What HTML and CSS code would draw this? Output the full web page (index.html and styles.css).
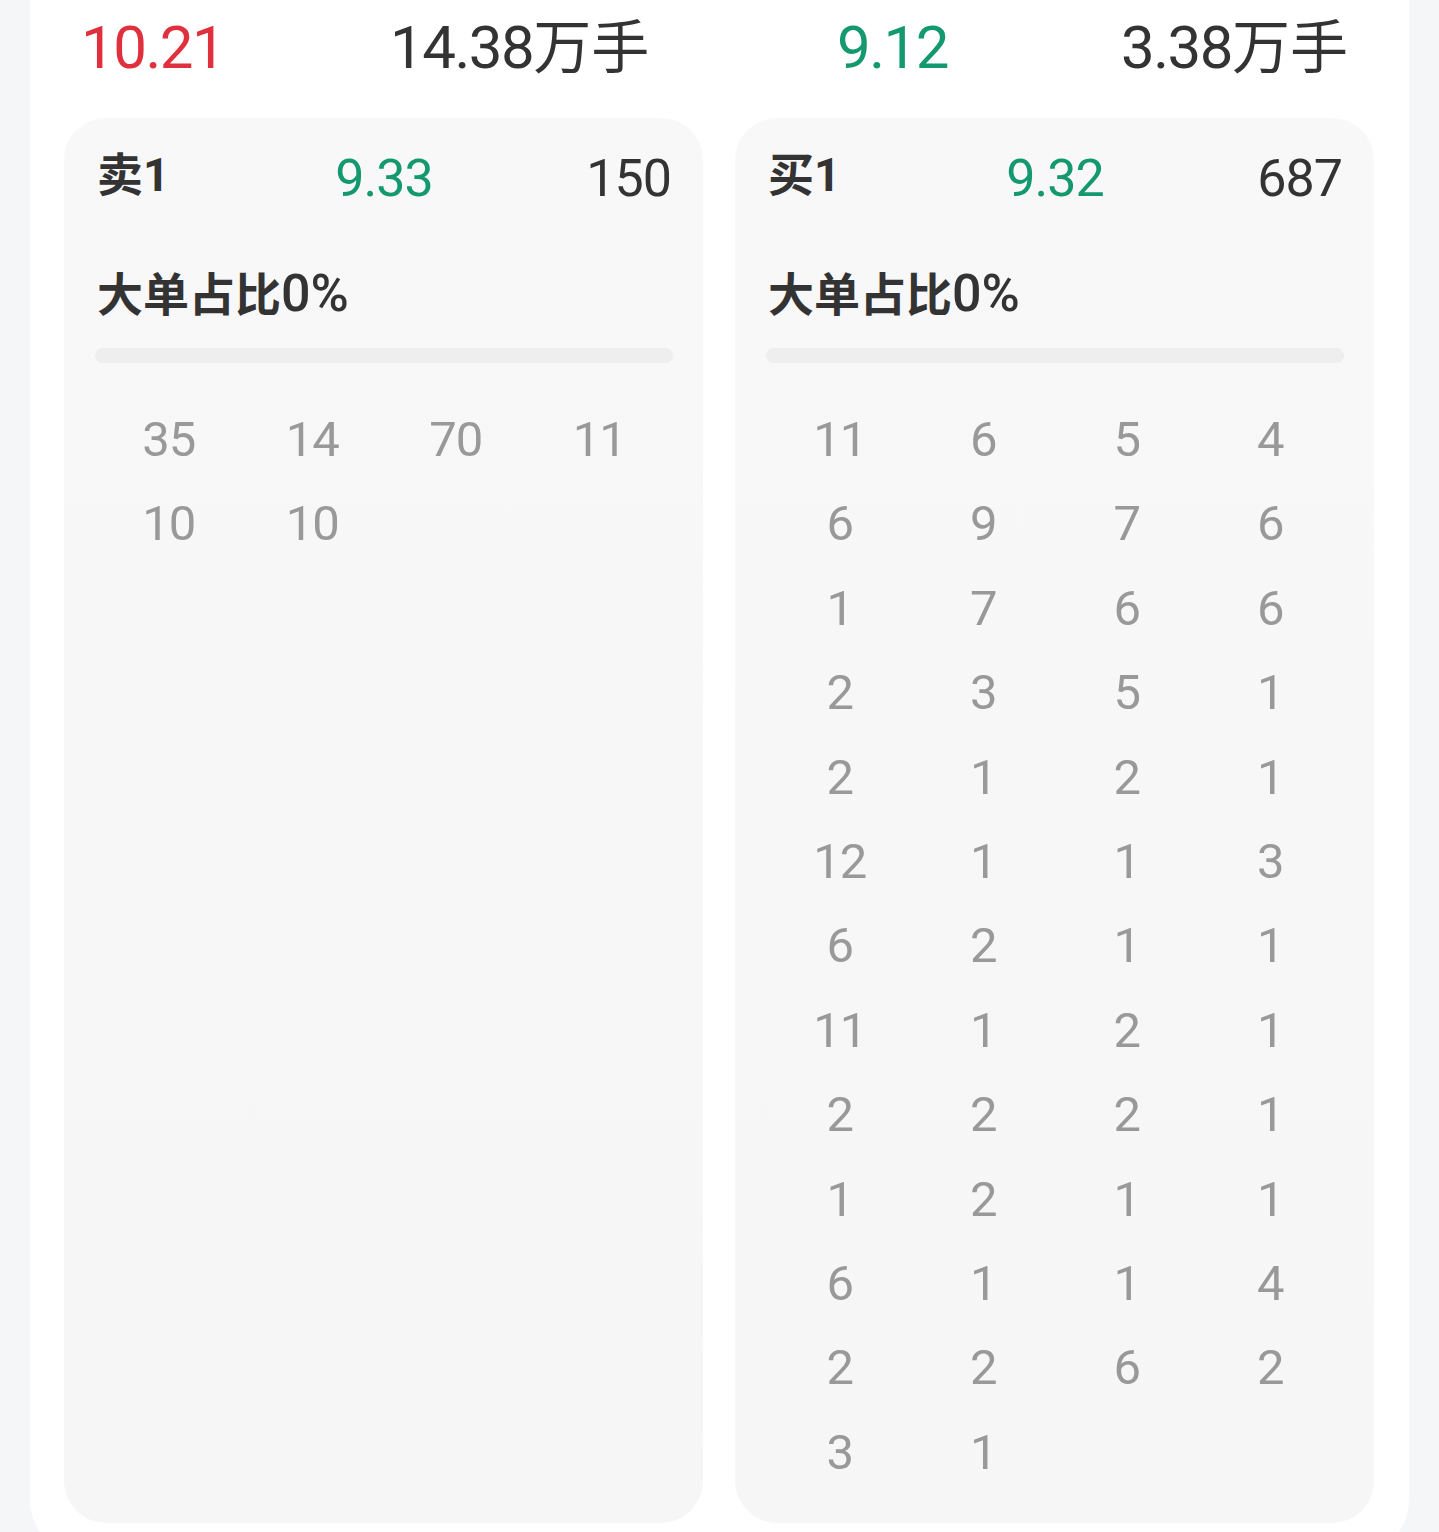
FILE: index.html
```html
<!DOCTYPE html>
<html lang="zh-CN">
<head>
<meta charset="utf-8">
<title>盘口</title>
<link rel="stylesheet" href="styles.css">
</head>
<body>
<div class="panel">
  <div class="summary">
    <span class="sum-item up">10.21</span>
    <span class="sum-item">14.38<span class="cjk">万手</span></span>
    <span class="sum-item down">9.12</span>
    <span class="sum-item">3.38<span class="cjk">万手</span></span>
  </div>
  <div class="cards">
    <div class="card">
      <div class="card-head">
        <span class="label">卖1</span>
        <span class="price down">9.33</span>
        <span class="vol">150</span>
      </div>
      <div class="title"><span class="cjk">大单占比</span><span class="pct">0%</span></div>
      <div class="bar"></div>
      <div class="orders">
        <span>35</span><span>14</span><span>70</span><span>11</span>
        <span>10</span><span>10</span>
      </div>
    </div>
    <div class="card">
      <div class="card-head">
        <span class="label">买1</span>
        <span class="price down">9.32</span>
        <span class="vol">687</span>
      </div>
      <div class="title"><span class="cjk">大单占比</span><span class="pct">0%</span></div>
      <div class="bar"></div>
      <div class="orders">
        <span>11</span><span>6</span><span>5</span><span>4</span>
        <span>6</span><span>9</span><span>7</span><span>6</span>
        <span>1</span><span>7</span><span>6</span><span>6</span>
        <span>2</span><span>3</span><span>5</span><span>1</span>
        <span>2</span><span>1</span><span>2</span><span>1</span>
        <span>12</span><span>1</span><span>1</span><span>3</span>
        <span>6</span><span>2</span><span>1</span><span>1</span>
        <span>11</span><span>1</span><span>2</span><span>1</span>
        <span>2</span><span>2</span><span>2</span><span>1</span>
        <span>1</span><span>2</span><span>1</span><span>1</span>
        <span>6</span><span>1</span><span>1</span><span>4</span>
        <span>2</span><span>2</span><span>6</span><span>2</span>
        <span>3</span><span>1</span>
      </div>
    </div>
  </div>
</div>
</body>
</html>
```

FILE: styles.css
```css
* { box-sizing: border-box; }

html, body {
  margin: 0;
  padding: 0;
  background: #f5f6f8;
}

body {
  font-family: Roboto, "Noto Sans CJK SC", sans-serif;
  color: #333333;
}

.panel {
  margin: 0 30px;
  background: #ffffff;
  border-radius: 0 0 56px 56px;
  padding: 7px 35px 33px 34px;
}

.summary {
  display: grid;
  grid-template-columns: 309px 447px 284px auto;
  align-items: baseline;
  padding-left: 17px;
  font-size: 60px;
  line-height: 72px;
  letter-spacing: -1.5px;
  white-space: nowrap;
}

.sum-item .cjk {
  font-family: "Noto Sans CJK SC", sans-serif;
  font-size: 58px;
  letter-spacing: 0;
}

.up { color: #e0303e; }
.down { color: #14996f; }

.cards {
  display: flex;
  gap: 32px;
  margin-top: 34px;
}

.card {
  flex: 1 1 0;
  border-radius: 42px;
  background: linear-gradient(180deg, #f8f8f8 0%, #f6f6f6 100%);
  padding: 21px 32px 28px 33px;
}

.card-head {
  display: grid;
  grid-template-columns: 1fr auto 1fr;
  align-items: start;
  height: 80px;
}

.label {
  justify-self: start;
  font-size: 46px;
  font-weight: 700;
  line-height: 72px;
  color: #333333;
}

.price, .vol {
  font-size: 52px;
  line-height: 80px;
  letter-spacing: -1px;
}

.vol {
  justify-self: end;
  color: #333333;
}

.title {
  margin-top: 45px;
  font-size: 46px;
  line-height: 60px;
  font-weight: 700;
  color: #333333;
  white-space: nowrap;
}

.title .pct {
  font-size: 52px;
  font-weight: 500;
}

.bar {
  margin-top: 23px;
  margin-left: -2px;
  margin-right: -2px;
  height: 15px;
  border-radius: 8px;
  background: #eeeeee;
}

.orders {
  margin-top: 35px;
  display: grid;
  grid-template-columns: repeat(4, 1fr);
  grid-auto-rows: 84.4px;
  font-size: 49px;
  line-height: 84.4px;
  letter-spacing: -1px;
  color: #999999;
  text-align: center;
}
```
